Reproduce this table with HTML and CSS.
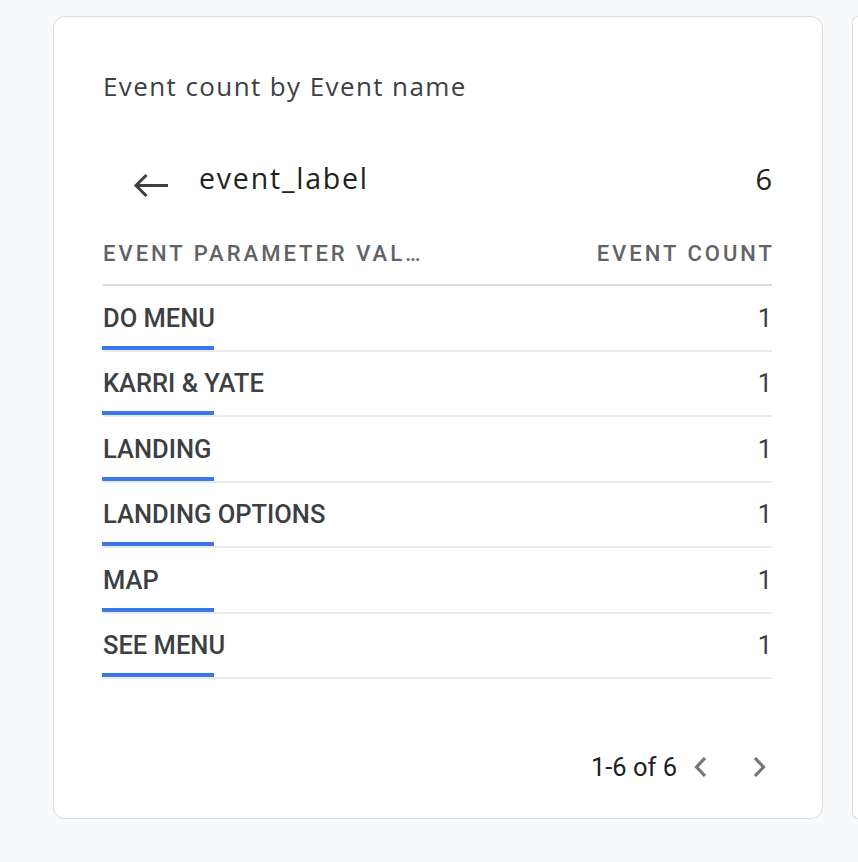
FILE: index.html
```html
<!DOCTYPE html>
<html>
<head>
<meta charset="utf-8">
<link rel="stylesheet" href="styles.css">
</head>
<body>
<div class="card">
  <div class="title">Event count by Event name</div>
  <div class="drill">
    <svg class="back" width="36" height="24" viewBox="0 0 36 24"><path d="M35 12.5H4 M13.5 2 L3 12.5 L13.5 23" fill="none" stroke="#3c4043" stroke-width="3"/></svg>
    <span class="drill-name">event_label</span>
    <span class="drill-total">6</span>
  </div>
  <div class="table">
    <div class="thead">
      <span class="th-label">EVENT PARAMETER VAL…</span>
      <span class="th-count">EVENT COUNT</span>
    </div>
    <div class="row"><span class="label">DO MENU</span><span class="count">1</span></div>
    <div class="row"><span class="label">KARRI &amp; YATE</span><span class="count">1</span></div>
    <div class="row"><span class="label">LANDING</span><span class="count">1</span></div>
    <div class="row"><span class="label">LANDING OPTIONS</span><span class="count">1</span></div>
    <div class="row"><span class="label">MAP</span><span class="count">1</span></div>
    <div class="row"><span class="label">SEE MENU</span><span class="count">1</span></div>
  </div>
  <div class="pager">
    <span class="range">1-6 of 6</span>
    <svg class="chev" width="24" height="24" viewBox="0 0 24 24"><path d="M17 3 L8.5 12 L17 21" fill="none" stroke="#757575" stroke-width="3.2"/></svg>
    <svg class="chev" width="24" height="24" viewBox="0 0 24 24"><path d="M7 3 L15.5 12 L7 21" fill="none" stroke="#757575" stroke-width="3.2"/></svg>
  </div>
</div>
<div class="card card-next"></div>
</body>
</html>
```

FILE: styles.css
```css
html, body {
  margin: 0;
  height: 100%;
}
body {
  background: #f8f9fa;
  display: flex;
  align-items: flex-start;
  gap: 29px;
  padding: 16px 0 0 53px;
  box-sizing: border-box;
  overflow: hidden;
  font-family: Roboto, "Liberation Sans", sans-serif;
}
.card {
  flex: none;
  width: 770px;
  height: 803px;
  box-sizing: border-box;
  background: #fff;
  border: 1px solid #dadce0;
  border-radius: 12px;
  padding: 53px 50px 0 49px;
  display: flex;
  flex-direction: column;
}
.card-next {
  flex: 1 0 0;
  width: auto;
  min-width: 0;
  border-right: 0;
  border-radius: 12px 0 0 12px;
  padding: 0;
}
.title {
  font-family: "Open Sans", Roboto, sans-serif;
  font-size: 26px;
  line-height: 32px;
  color: #3c4043;
  letter-spacing: 1.4px;
  white-space: nowrap;
}
.drill {
  display: flex;
  align-items: center;
  height: 60px;
  margin-top: 46px;
}
.back {
  margin-left: 30px;
  margin-top: 14px;
  flex: none;
}
.drill-name {
  margin-left: 30px;
  font-family: "Open Sans", Roboto, sans-serif;
  font-size: 28.5px;
  letter-spacing: 1.8px;
  color: #202124;
  flex: 1;
}
.drill-total {
  font-family: "Open Sans", Roboto, sans-serif;
  font-size: 29px;
  color: #202124;
}
.table {
  margin-top: 14px;
}
.thead {
  display: flex;
  justify-content: space-between;
  align-items: center;
  height: 64px;
  box-sizing: border-box;
  border-bottom: 2px solid #dadce0;
  font-size: 22px;
  font-weight: 500;
  letter-spacing: 3px;
  color: #5f6368;
  white-space: nowrap;
}
.th-count {
  margin-right: -3px;
}
.row {
  position: relative;
  display: flex;
  justify-content: space-between;
  align-items: center;
  height: 65.5px;
  box-sizing: border-box;
  border-bottom: 2px solid #e8eaed;
  font-size: 25.5px;
  font-weight: 500;
  color: #3c4043;
}
.row::after {
  content: "";
  position: absolute;
  left: -1px;
  bottom: 0;
  width: 112px;
  height: 4px;
  background: #3b78e7;
}
.row .count {
  font-weight: 400;
}
.pager {
  margin-top: auto;
  margin-bottom: 36px;
  display: flex;
  justify-content: flex-end;
  align-items: center;
}
.range {
  font-size: 25.5px;
  color: #202124;
  margin-right: 11px;
}
.chev + .chev {
  margin-left: 36px;
}
```
